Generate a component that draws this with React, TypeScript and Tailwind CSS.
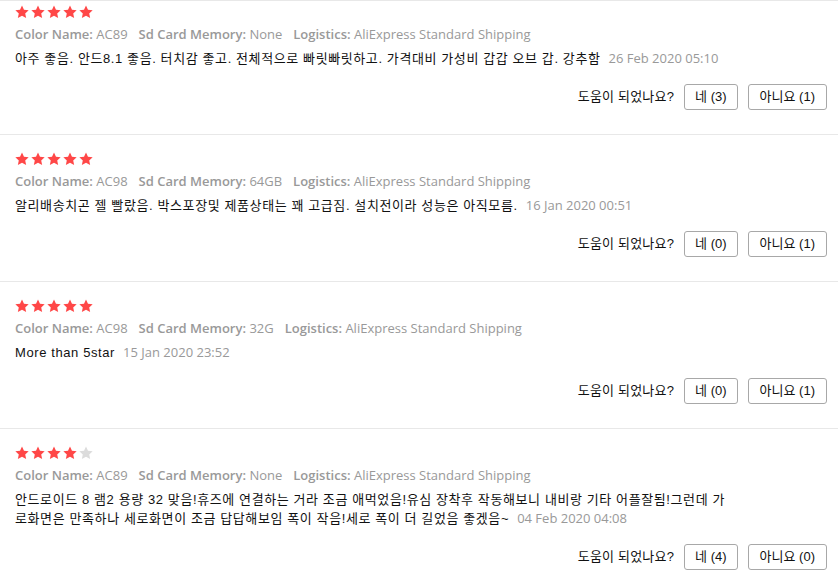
import React from "react";

type Review = {
  rating: number;
  color: string;
  memory: string;
  text: string;
  date: string;
  yes: number;
  no: number;
};

const reviews: Review[] = [
  {
    rating: 5,
    color: "AC89",
    memory: "None",
    text: "아주 좋음. 안드8.1 좋음. 터치감 좋고. 전체적으로 빠릿빠릿하고. 가격대비 가성비 갑갑 오브 갑. 강추함",
    date: "26 Feb 2020 05:10",
    yes: 3,
    no: 1,
  },
  {
    rating: 5,
    color: "AC98",
    memory: "64GB",
    text: "알리배송치곤 젤 빨랐음. 박스포장및 제품상태는 꽤 고급짐. 설치전이라 성능은 아직모름.",
    date: "16 Jan 2020 00:51",
    yes: 0,
    no: 1,
  },
  {
    rating: 5,
    color: "AC98",
    memory: "32G",
    text: "More than 5star",
    date: "15 Jan 2020 23:52",
    yes: 0,
    no: 1,
  },
  {
    rating: 4,
    color: "AC89",
    memory: "None",
    text: "안드로이드 8 램2 용량 32 맞음!휴즈에 연결하는 거라 조금 애먹었음!유심 장착후 작동해보니 내비랑 기타 어플잘됨!그런데 가로화면은 만족하나 세로화면이 조금 답답해보임 폭이 작음!세로 폭이 더 길었음 좋겠음~",
    date: "04 Feb 2020 04:08",
    yes: 4,
    no: 0,
  },
];

const sans = "font-['Open_Sans','Noto_Sans_CJK_KR',sans-serif]";
const kr = "font-['Liberation_Sans','Noto_Sans_CJK_KR',sans-serif]";

function Star({ on }: { on: boolean }) {
  return (
    <svg width="14" height="14" viewBox="0 0 24 24" className="mr-[2px] shrink-0">
      <path
        d="M12 .8l3.4 7.3 8 .9-5.9 5.5 1.6 7.9L12 18.5l-7.1 3.9 1.6-7.9L.6 9l8-.9z"
        fill={on ? "#ff4747" : "#dcdcdc"}
      />
    </svg>
  );
}

function Meta({ label, value }: { label: string; value: string }) {
  return (
    <span className="mr-[11px] whitespace-nowrap">
      <span className="font-semibold">{label}:</span> {value}
    </span>
  );
}

function ReviewRow({ r, first }: { r: Review; first: boolean }) {
  return (
    <div
      className={`border-b border-[#e8e8e8] pl-[15px] pr-[11px] pb-[24px] ${
        first ? "pt-[4px]" : "pt-[17px]"
      }`}
    >
      <div className="flex h-[14px] items-center">
        {[0, 1, 2, 3, 4].map((i) => (
          <Star key={i} on={i < r.rating} />
        ))}
      </div>
      <div className={`mt-[6px] text-[13px] leading-[18px] text-[#999] ${sans}`}>
        <Meta label="Color Name" value={r.color} />
        <Meta label="Sd Card Memory" value={r.memory} />
        <Meta label="Logistics" value="AliExpress Standard Shipping" />
      </div>
      <p
        className={`mt-[6px] max-w-[722px] break-all text-[13px] leading-[19px] tracking-[0.6px] text-[#111] ${kr}`}
      >
        {r.text}
        <span className={`ml-[8px] tracking-normal text-[#999] ${sans}`}>
          {r.date}
        </span>
      </p>
      <div
        className={`mt-[16px] flex items-center justify-end text-[13px] text-[#111] ${kr}`}
      >
        <span className="mr-[10px] tracking-[0.2px]">도움이 되었나요?</span>
        <button className="mr-[10px] h-[26px] rounded-[3px] border border-[#a8a8a8] bg-white px-[10px]">
          네 ({r.yes})
        </button>
        <button className="h-[26px] rounded-[3px] border border-[#a8a8a8] bg-white px-[11px]">
          아니요 ({r.no})
        </button>
      </div>
    </div>
  );
}

export default function App() {
  return (
    <div className="h-[587px] w-[838px] overflow-hidden border-t border-[#e8e8e8] bg-white">
      {reviews.map((r, i) => (
        <ReviewRow key={i} r={r} first={i === 0} />
      ))}
    </div>
  );
}
